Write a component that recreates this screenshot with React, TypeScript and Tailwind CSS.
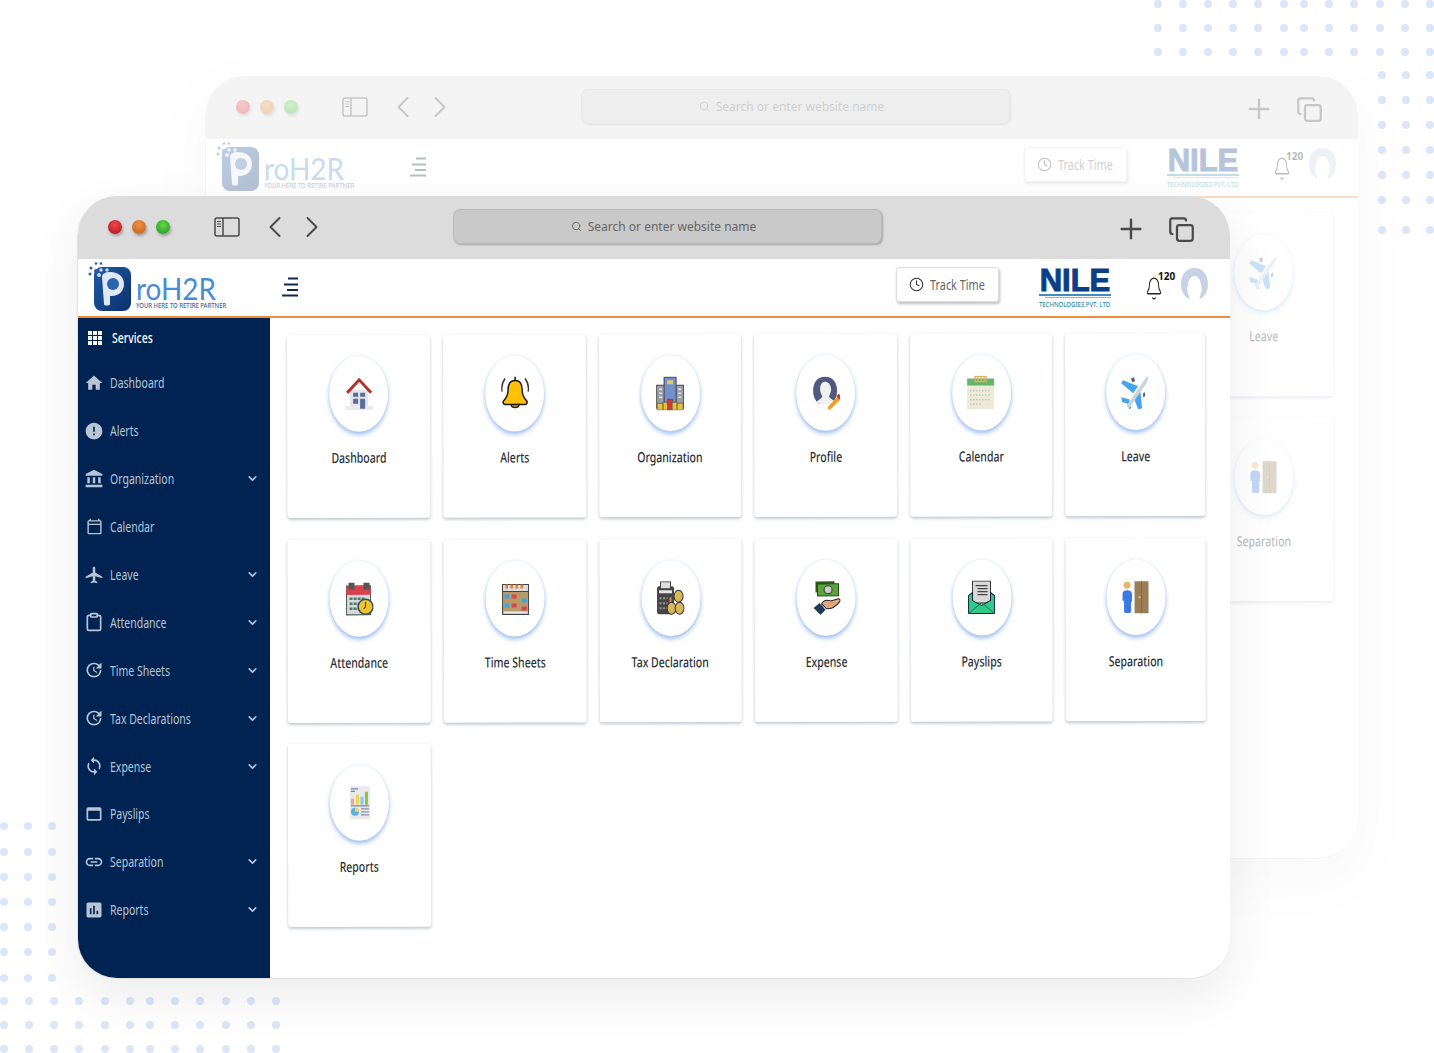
import React from 'react';
import { Bell, ChevronDown, ChevronLeft, ChevronRight, Clipboard, Clock, Copy, Plus, Search } from 'lucide-react';
import {
  MdAccountBalance,
  MdAirplanemodeActive,
  MdAssessment,
  MdError,
  MdHome,
  MdLink,
  MdOutlineCalendarToday,
  MdOutlineWebAsset,
  MdSync,
  MdUpdate,
} from 'react-icons/md';

const HomeIcon = () => (
  <svg viewBox="0 0 28 34" className="w-[28px] h-[34px]">
    <rect x="5" y="13" width="18" height="18" fill="#e3e5ea" />
    <rect x="0" y="29" width="28" height="4" fill="#e9eaee" />
    <path d="M2 16 14 3l12 13" fill="none" stroke="#b8322b" strokeWidth="3" />
    <rect x="8" y="16" width="5" height="4" fill="#5a6c9c" />
    <rect x="15" y="16" width="5" height="4" fill="#5a6c9c" />
    <rect x="8" y="22" width="5" height="5" fill="#5a6c9c" />
    <rect x="15" y="22" width="5" height="10" fill="#5a6c9c" />
  </svg>
);

const AlertIcon = () => (
  <svg viewBox="0 0 28 34" className="w-[28px] h-[34px]">
    <path d="M14 4c5 0 7 4 7 9 0 6 2 9 5 12 0 2-1 3-2 3H4c-1 0-2-1-2-3 3-3 5-6 5-12 0-5 2-9 7-9Z" fill="#ffc107" stroke="#1a1a1a" strokeWidth="1.5" />
    <path d="M10 28c0 4 8 4 8 0Z" fill="#e09b00" stroke="#1a1a1a" strokeWidth="1.3" />
    <path d="M14 0v4" stroke="#1a1a1a" strokeWidth="1.5" />
    <path d="M4 2C1 6 0 10 1 15M24 2c3 4 4 8 3 13" fill="none" stroke="#333" strokeWidth="1.4" />
  </svg>
);

const OrgIcon = () => (
  <svg viewBox="0 0 28 34" className="w-[28px] h-[34px]">
    <rect x="0.5" y="9" width="27" height="23" fill="#9a9fa8" stroke="#444" />
    <rect x="8" y="1" width="12" height="29" fill="#7190cf" stroke="#444" />
    <rect x="11" y="4" width="6" height="4" fill="#e3c765" />
    <path d="M3 13h3M3 17h3M3 21h3M22 13h3M22 17h3M22 21h3" stroke="#e6e6e6" strokeWidth="1.5" />
    <rect x="1" y="27" width="6" height="7" fill="#e3c040" stroke="#444" strokeWidth=".6" />
    <rect x="7" y="26" width="5" height="8" fill="#e3c040" stroke="#444" strokeWidth=".6" />
    <rect x="11.5" y="23" width="5" height="11" fill="#d83a3a" stroke="#444" strokeWidth=".6" />
    <rect x="16" y="26" width="5" height="8" fill="#e3c040" stroke="#444" strokeWidth=".6" />
    <rect x="21" y="27" width="6" height="7" fill="#e3c040" stroke="#444" strokeWidth=".6" />
  </svg>
);

const ProfileIcon = () => (
  <svg viewBox="0 0 28 34" className="w-[28px] h-[34px]">
    <path d="M13 1C5 1 1 7 1 15c0 6 3 11 6 13h12c3-2 6-7 6-13 0-8-4-14-12-14Z" fill="#51597f" />
    <path d="M13 6c-4 0-5 4-5 8 0 3 2 5 2 7-1 2-4 3-6 5 3 3 15 4 19 0-2-2-5-3-6-5 0-2 2-4 2-7 0-4-2-8-6-8Z" fill="#eef0f2" />
    <path d="M26 20l3 3-11 11-2 0 0-3Z" fill="#eaa02a" />
    <path d="M24 20l3-2 2 3-2 3Z" fill="#c8402e" />
  </svg>
);

const CalendarIcon = () => (
  <svg viewBox="0 0 28 34" className="w-[28px] h-[34px]">
    <rect x="0" y="4" width="27" height="30" fill="#ecead8" />
    <rect x="0" y="3" width="27" height="7" fill="#62b56a" />
    <path d="M8 1h11v5H8Z" fill="none" stroke="#e3b063" strokeWidth="1.4" />
    <path d="M11 1v5M14 1v5M17 1v5" stroke="#e3b063" strokeWidth="1" />
    <path d="M3 15h21M3 19.500h21M3 24h21M3 28.500h12" stroke="#bdbcae" strokeWidth="1.3" strokeDasharray="1.300 1.700" />
  </svg>
);

const LeaveIcon = () => (
  <svg viewBox="0 0 28 34" className="w-[28px] h-[34px]">
    <path d="M2 5 0 8l12 10 5-7ZM19 14l-7 7 5 13 4-1ZM0 22l1 5 5 1 2 6 2-1-2-9Z" fill="#47a4ee" />
    <path d="M10 3l3-1 1 4-3 1ZM22 18l2-1 0 4-2 1Z" fill="#5a6470" />
    <path d="M5 31 21 8c2-3 4-6 6-7 1 2-1 6-3 9L8 33Z" fill="#c9d3da" />
  </svg>
);

const AttendanceIcon = () => (
  <svg viewBox="0 0 28 34" className="w-[28px] h-[34px]">
    <rect x="1" y="4" width="24" height="29" fill="#d8d9da" stroke="#555" />
    <rect x="1" y="4" width="24" height="9" fill="#d9414b" />
    <rect x="3" y="1" width="6" height="7" fill="#555" />
    <rect x="18" y="1" width="6" height="7" fill="#555" />
    <path d="M4 17h16M4 22h10M4 27h10" stroke="#51786f" strokeWidth="2.500" strokeDasharray="3 1" />
    <circle cx="20" cy="25" r="7.500" fill="#f2c12e" stroke="#2d5361" strokeWidth="1.500" />
    <path d="M20 20v5l-2 2" fill="none" stroke="#333" strokeWidth="1" />
  </svg>
);

const TimeSheetIcon = () => (
  <svg viewBox="0 0 28 34" className="w-[28px] h-[34px]">
    <rect x="1" y="3" width="26" height="30" fill="#b89a6a" stroke="#444" />
    <rect x="1" y="3" width="26" height="7" fill="#ddd" stroke="#444" />
    <path d="M4 5h20" stroke="#e27d30" strokeWidth="4" strokeDasharray="2.500 2.500" />
    <rect x="3" y="13" width="5" height="4" fill="#3ba5e0" />
    <rect x="10" y="13" width="5" height="4" fill="#d8434a" />
    <rect x="20" y="17" width="5" height="4" fill="#3ba5e0" />
    <rect x="3" y="22" width="5" height="4" fill="#3ba5e0" />
    <rect x="10" y="22" width="5" height="4" fill="#d8434a" />
    <rect x="20" y="25" width="5" height="4" fill="#d8434a" />
    <rect x="2" y="30" width="24" height="2" fill="#eee" />
  </svg>
);

const TaxIcon = () => (
  <svg viewBox="0 0 28 34" className="w-[28px] h-[34px]">
    <rect x="0.500" y="5" width="17" height="28" rx="2" fill="#444" />
    <rect x="4" y="0.500" width="10" height="7" fill="#ddd" stroke="#444" />
    <rect x="2.500" y="9" width="13" height="3" fill="#e5e5e5" />
    <path d="M3 17h8M3 22h8M3 27h8" stroke="#999" strokeWidth="2" strokeDasharray="2 1.500" />
    <rect x="13" y="16" width="2" height="9" fill="#e38a2b" />
    <ellipse cx="22" cy="15" rx="4.500" ry="6" fill="#d9b658" stroke="#333" />
    <ellipse cx="15" cy="27" rx="4.500" ry="6" fill="#d9b658" stroke="#333" />
    <ellipse cx="23" cy="27" rx="4.500" ry="6" fill="#d9b658" stroke="#333" />
  </svg>
);

const ExpenseIcon = () => (
  <svg viewBox="0 0 28 34" className="w-[28px] h-[34px]">
    <rect x="3" y="0.500" width="19" height="11" fill="#2c5a1a" />
    <rect x="5" y="3" width="21" height="12" fill="#5da23a" stroke="#27491a" />
    <circle cx="15.500" cy="9" r="4" fill="#c4d0c8" stroke="#333" />
    <path d="M9 23c2-4 6-4 9-3l8-2c2 0 2 2 1 3-3 4-8 7-13 7Z" fill="#e0a878" stroke="#222" />
    <path d="M1 27l6-5 6 7-5 5Z" fill="#1f3a52" />
  </svg>
);

const PayslipIcon = () => (
  <svg viewBox="0 0 28 34" className="w-[28px] h-[34px]">
    <rect x="5" y="0.500" width="18" height="22" fill="#d8d8d8" stroke="#333" />
    <path d="M8 5h12M10 8h10M10 11h10M10 14h10" stroke="#444" strokeWidth="1.200" />
    <path d="M1 15l4-3v8l9 5 9-5v-8l4 3v18H1Z" fill="#2ecb8a" stroke="#123" strokeWidth="1" />
    <path d="M1 33l13-11 13 11" fill="none" stroke="#1b8a5c" strokeWidth="1" />
  </svg>
);

const SeparationIcon = () => (
  <svg viewBox="0 0 28 34" className="w-[28px] h-[34px]">
    <circle cx="5.500" cy="5" r="3.500" fill="#e8b66a" />
    <path d="M1 14c0-3 2-4 4.500-4s5 1 5 4v7l-1 1v10c0 1-7 1-7 0V21l-1.500-1Z" fill="#3a78e8" />
    <rect x="13" y="1" width="14" height="32" fill="#9a7e58" />
    <path d="M20 1v32" stroke="#86693f" strokeWidth="1" />
    <rect x="17" y="16" width="2" height="2" fill="#e8c050" />
  </svg>
);

const ReportIcon = () => (
  <svg viewBox="0 0 28 34" className="w-[28px] h-[34px]">
    <rect x="4" y="0.500" width="20" height="33" fill="#e9e9ec" />
    <path d="M5 3h7M5 5.500h4" stroke="#7d83a8" strokeWidth="1.300" />
    <rect x="5" y="13" width="3" height="6" fill="#f0a4a0" />
    <rect x="10" y="9" width="3" height="10" fill="#f5d44a" />
    <rect x="14.500" y="11" width="3" height="8" fill="#86c9e8" />
    <rect x="19" y="6" width="3" height="13" fill="#8bc34a" />
    <path d="M5 20h18" stroke="#7d83a8" strokeWidth="1.300" />
    <circle cx="9" cy="26" r="4" fill="#5ab0de" />
    <path d="M9 26V22a4 4 0 0 1 4 4Z" fill="#f5d44a" />
    <path d="M15 23h8M15 26h8M15 29h8" stroke="#8a8fa8" strokeWidth="1.300" />
  </svg>
);

const SERVICES = [
  { label: 'Dashboard', icon: HomeIcon },
  { label: 'Alerts', icon: AlertIcon },
  { label: 'Organization', icon: OrgIcon },
  { label: 'Profile', icon: ProfileIcon },
  { label: 'Calendar', icon: CalendarIcon },
  { label: 'Leave', icon: LeaveIcon },
  { label: 'Attendance', icon: AttendanceIcon },
  { label: 'Time Sheets', icon: TimeSheetIcon },
  { label: 'Tax Declaration', icon: TaxIcon },
  { label: 'Expense', icon: ExpenseIcon },
  { label: 'Payslips', icon: PayslipIcon },
  { label: 'Separation', icon: SeparationIcon },
  { label: 'Reports', icon: ReportIcon },
];

const MENU = [
  { label: 'Dashboard', icon: MdHome },
  { label: 'Alerts', icon: MdError },
  { label: 'Organization', icon: MdAccountBalance, more: true },
  { label: 'Calendar', icon: MdOutlineCalendarToday, small: true },
  { label: 'Leave', icon: MdAirplanemodeActive, more: true },
  { label: 'Attendance', icon: Clipboard, more: true },
  { label: 'Time Sheets', icon: MdUpdate, more: true },
  { label: 'Tax Declarations', icon: MdUpdate, more: true },
  { label: 'Expense', icon: MdSync, more: true },
  { label: 'Payslips', icon: MdOutlineWebAsset },
  { label: 'Separation', icon: MdLink, more: true },
  { label: 'Reports', icon: MdAssessment, more: true },
];

const TOP_DOTS = [1158, 1183, 1208, 1233, 1258, 1284, 1304, 1329, 1354, 1380, 1405, 1430];
const BOTTOM_DOTS = [4, 29, 54, 79, 105, 130, 150, 175, 200, 226, 251, 276];

// dotted backdrop, each block is a plain little grid of circles
const DotRows = ({ xs, ys }: { xs: number[]; ys: number[] }) => (
  <svg viewBox="0 0 1434 1053" className="absolute inset-0 w-[1434px] h-[1053px]">
    {ys.map((y) => xs.map((x) => <circle key={`${x}-${y}`} cx={x} cy={y} r="4" fill="#dbe6f9" />))}
  </svg>
);

const Logo = () => (
  <div className="flex items-start w-[140px] h-[49px]">
    <svg viewBox="0 0 46 49" className="w-[46px] h-[49px] shrink-0">
      <defs>
        <linearGradient id="logoBlue" x1="0" y1="0" x2="1" y2="1">
          <stop offset="0" stopColor="#1d5aa8" />
          <stop offset="1" stopColor="#0b2f6b" />
        </linearGradient>
      </defs>
      <rect x="6" y="5" width="37" height="44" rx="8" fill="url(#logoBlue)" />
      <path d="M14 15c0-3 3-5 8-5 9 0 14 5 14 12s-5 12-12 12h-2v8c0 2-6 2-6 0Z" fill="#dfe8f4" />
      <circle cx="25" cy="22" r="6" fill="#2a64ae" />
      <circle cx="3" cy="6" r="1.500" fill="#2b5ea8" />
      <circle cx="8" cy="1.500" r="1.300" fill="#2b5ea8" />
      <circle cx="13" cy="1.500" r="1.300" fill="#2b5ea8" />
      <circle cx="8" cy="9" r="2" fill="#2b5ea8" />
      <circle cx="2" cy="12" r="1.500" fill="#2b5ea8" />
      <circle cx="13" cy="8" r="1.800" fill="#c8d8ee" />
      <circle cx="19" cy="8" r="1.800" fill="#c8d8ee" />
      <circle cx="11" cy="13" r="2" fill="#c8d8ee" />
    </svg>
    <div className="ml-[2px] flex flex-col pt-[13px]">
      <span className="inline-block origin-left scale-x-[0.9] font-['Lato',sans-serif] font-normal text-[31px] leading-[27px] text-[#4a8bd6]">roH2R</span>
      <span className="inline-block origin-left scale-x-[0.91] whitespace-nowrap text-[6.500px] leading-[8px] font-medium text-[#3d5f95]">YOUR HERE TO RETIRE PARTNER</span>
    </div>
  </div>
);

const NileLogo = () => (
  <div className="w-[72px] h-[41px] flex flex-col items-center">
    <span className="inline-block font-['Liberation_Sans',sans-serif] font-bold text-[31px] leading-[26px] [-webkit-text-stroke:1px_#0a3f86] text-[#0a3f86]">NILE</span>
    <div className="w-full h-[2px] bg-[#3d8fc0]" />
    <div className="w-[66px] self-end h-[1px] mt-[1px] bg-[#79bdd2]" />
    <span className="inline-block scale-x-[0.8] whitespace-nowrap text-[7.500px] leading-[10px] mt-[1px] font-medium text-[#2b8fa6]">TECHNOLOGIES PVT. LTD</span>
  </div>
);

const Avatar = () => (
  <svg viewBox="0 0 27 32" className="w-[27px] h-[32px]">
    <path d="M13.500 0C5 0 0 7 0 16c0 8 4 13 8 15 1-1 0-3-1-5-1-3-1-6 0-10 1-5 3-8 6.500-8s5.500 3 6.500 8c1 4 1 7 0 10-1 2-2 4-1 5 4-2 8-7 8-15C27 7 22 0 13.500 0Z" fill="#c6d2e6" />
  </svg>
);

const Sidebar = () => (
  <aside className="w-[192px] shrink-0 bg-[#002352]">
    <div className="flex items-center h-[39px] pl-[10px] text-white">
      <svg viewBox="0 0 14 14" className="w-[14px] h-[14px]" fill="currentColor">
        <path d="M0 0h4v4H0zM5 0h4v4H5zM10 0h4v4h-4zM0 5h4v4H0zM5 5h4v4H5zM10 5h4v4h-4zM0 10h4v4H0zM5 10h4v4H5zM10 10h4v4h-4z" />
      </svg>
      <span className="ml-[10px] inline-block origin-left scale-x-[0.75] text-[14px] font-medium">Services</span>
    </div>
    <nav className="flex flex-col mt-[2px]">
      {MENU.map((item) => (
        <div key={item.label} className="flex items-center h-[47.900px] pl-[6px] pr-[11px] text-[#b9c5d6]">
          <span className="w-[20px] flex justify-center shrink-0">
            <item.icon size={item.small ? 17 : 20} />
          </span>
          <span className="ml-[6px] inline-block origin-left scale-x-[0.75] whitespace-nowrap text-[14px]">{item.label}</span>
          {item.more && <ChevronDown size={13} strokeWidth={3} className="ml-auto" />}
        </div>
      ))}
    </nav>
  </aside>
);

const ServiceCard = ({ label, icon: Icon }: { label: string; icon: React.FC }) => (
  <div className="h-[183px] flex flex-col items-center pt-[21px] rounded-[3px] bg-white shadow-[0_2px_3px_rgba(70,90,130,0.3),0_0_3px_rgba(0,0,0,0.06)]">
    <div className="w-[59px] h-[76px] flex items-center justify-center rounded-[50%] bg-white shadow-[0_3px_4px_rgba(90,145,230,0.55),0_0_3px_rgba(90,145,230,0.2)]">
      <Icon />
    </div>
    <span className="mt-[16px] inline-block scale-x-[0.75] whitespace-nowrap text-[14px] leading-[20px] font-medium text-[#2a2f36]">{label}</span>
  </div>
);

const TitleBar = () => (
  <div className="h-[63px] shrink-0 flex items-center pl-[30px] pb-[2px] bg-[#dcdcdc] text-[#4a4a4a]">
    <span className="w-[14px] h-[14px] rounded-full bg-[radial-gradient(circle_at_50%_35%,#f0484c,#a8101c)] shadow-[1px_2px_3px_rgba(0,0,0,0.3)]" />
    <span className="ml-[10px] w-[14px] h-[14px] rounded-full bg-[radial-gradient(circle_at_50%_35%,#f09040,#c06018)] shadow-[1px_2px_3px_rgba(0,0,0,0.3)]" />
    <span className="ml-[10px] w-[14px] h-[14px] rounded-full bg-[radial-gradient(circle_at_50%_35%,#60d840,#20902a)] shadow-[1px_2px_3px_rgba(0,0,0,0.3)]" />
    <svg viewBox="0 0 26 20" className="ml-[44px] w-[26px] h-[20px]" fill="none" stroke="currentColor">
      <rect x="1" y="1" width="24" height="18" rx="2" strokeWidth="1.500" />
      <path d="M9 1v18" strokeWidth="1.500" />
      <path d="M3 4.500h4M3 7h4M3 9.500h4" strokeWidth="1" />
    </svg>
    <ChevronLeft size={36} strokeWidth={1.300} className="ml-[17px]" />
    <ChevronRight size={36} strokeWidth={1.300} className="ml-px" />
    <div className="ml-[123px] w-[429px] h-[35px] flex items-center justify-center gap-[6px] pr-[8px] rounded-[7px] bg-[#c9c9c9] border border-[#bababa] shadow-[1px_1px_2px_rgba(0,0,0,0.25)] text-[#666]">
      <Search size={11} strokeWidth={2} />
      <span className="text-[12px]">Search or enter website name</span>
    </div>
    <Plus size={32} strokeWidth={1.800} className="ml-[233px] mt-[4px]" />
    <Copy size={27} strokeWidth={2} className="ml-[21px] mt-[5px]" />
  </div>
);

const Header = () => (
  <header className="h-[59px] shrink-0 flex items-center pl-[10px] pb-[2px] bg-white border-b-2 border-[#f08a3c]">
    <Logo />
    <svg viewBox="0 0 16 20" className="ml-[54px] w-[16px] h-[20px]" fill="none" stroke="#12294f" strokeWidth="2.200">
      <path d="M6 1.500h10M2 7.500h14M5 13h11M0 18.500h16" />
    </svg>
    <button className="ml-[598px] -mt-[4px] w-[103px] h-[35px] flex items-center justify-center rounded-[3px] bg-white border border-[#dddddd] shadow-[1px_2px_3px_rgba(0,0,0,0.25)] text-[#333]">
      <Clock size={15} strokeWidth={1.700} />
      <span className="ml-[6px] w-[56px] inline-block origin-left scale-x-[0.75] whitespace-nowrap text-[14.500px] text-[#666]">Track Time</span>
    </button>
    <div className="ml-[40px] mt-[3px]"><NileLogo /></div>
    <div className="relative ml-[34px] mt-[3px]">
      <Bell strokeWidth={1.300} preserveAspectRatio="none" className="w-[18px] h-[25px] text-[#222]" />
      <span className="absolute -top-[6px] left-[13px] text-[10px] leading-[12px] font-bold text-[#111]">120</span>
    </div>
    <div className="ml-[18px] -mt-[5px]"><Avatar /></div>
  </header>
);

// the same window is drawn twice: the faded copy behind, the real one in front
const BrowserWindow = ({ className }: { className: string }) => (
  <div className={`absolute w-[1153px] h-[783px] flex flex-col overflow-hidden rounded-[40px] bg-white border-l border-b border-[#e3e3e3] shadow-[0_18px_50px_rgba(0,0,0,0.08)] ${className}`}>
    <TitleBar />
    <Header />
    <div className="flex-1 flex min-h-0">
      <Sidebar />
      <main className="flex-1 pl-[17px] pt-[17px]">
        <div className="grid grid-cols-[143px_143px_142px_143px_142px_140px] gap-x-[13px] gap-y-[21.500px] origin-top-left rotate-[-0.12deg]">
          {SERVICES.map((s) => (
            <ServiceCard key={s.label} label={s.label} icon={s.icon} />
          ))}
        </div>
      </main>
    </div>
  </div>
);

export default function App() {
  return (
    <div className="relative w-[1434px] h-[1053px] overflow-hidden bg-white font-['Noto_Sans',sans-serif]">
      <DotRows xs={TOP_DOTS} ys={[4, 28, 52]} />
      <DotRows xs={[1382, 1406, 1430]} ys={[75, 100, 125, 150, 175, 200, 230]} />
      <DotRows xs={[4, 28, 52]} ys={[826, 852, 877, 902, 927, 952, 978]} />
      <DotRows xs={BOTTOM_DOTS} ys={[1001, 1025, 1049]} />
      <BrowserWindow className="left-[205px] top-[76px] opacity-30" />
      <BrowserWindow className="left-[77px] top-[196px]" />
    </div>
  );
}
